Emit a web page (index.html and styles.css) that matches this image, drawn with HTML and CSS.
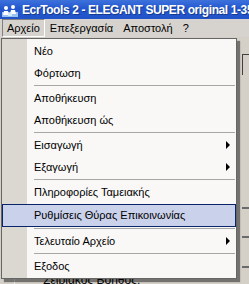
FILE: index.html
```html
<!DOCTYPE html>
<html lang="el">
<head>
    <meta charset="UTF-8">
    <title>EcrTools 2</title>
    <link rel="stylesheet" href="styles.css">
</head>
<body>
    <div class="window">
        <div class="titlebar">
            <svg class="app-icon" width="16" height="14" viewBox="0 0 16 14">
                <rect x="0" y="9" width="16" height="5" fill="#9cc2f0"/>
                <circle cx="4" cy="5" r="2" fill="#fff"/>
                <path d="M1 12 L2 8 L6 8 L7 12 Z" fill="#fff"/>
                <circle cx="11" cy="4" r="2" fill="#fff"/>
                <path d="M8 11 L9 7 L13 7 L14 11 Z" fill="#fff"/>
                <rect x="6" y="10" width="4" height="3" fill="#d8e8ff"/>
            </svg>
            <span class="title">EcrTools 2 - ELEGANT SUPER original 1-35</span>
        </div>

        <div class="menubar">
            <span class="menu-head open">Αρχείο</span>
            <span class="menu-head">Επεξεργασία</span>
            <span class="menu-head">Αποστολή</span>
            <span class="menu-head">?</span>
        </div>

        <div class="client">
            <div class="form-side">
                <div class="field top"></div>
                <div class="rule r1"></div>
                <div class="rule r2"></div>
                <div class="rule r3"></div>
            </div>
            <div class="bottom-label">Σειριακός Βοηθός:</div>
        </div>

        <!-- ανοιχτό μενού Αρχείο -->
        <div class="dropdown">
            <div class="item">Νέο</div>
            <div class="item">Φόρτωση</div>
            <div class="sep"></div>
            <div class="item">Αποθήκευση</div>
            <div class="item">Αποθήκευση ώς</div>
            <div class="sep"></div>
            <div class="item sub">Εισαγωγή</div>
            <div class="item sub">Εξαγωγή</div>
            <div class="sep"></div>
            <div class="item">Πληροφορίες Ταμειακής</div>
            <div class="item hover">Ρυθμίσεις Θύρας Επικοινωνίας</div>
            <div class="sep"></div>
            <div class="item sub">Τελευταίο Αρχείο</div>
            <div class="sep"></div>
            <div class="item">Εξοδος</div>
        </div>
    </div>
</body>
</html>
```

FILE: styles.css
```css
body {
    margin: 0;
    padding: 0;
    font-family: 'Liberation Sans', Arial, sans-serif;
    font-size: 11px;
    color: #000;
    background: #d4d0c8;
}

.window {
    position: relative;
    width: 249px;
    height: 284px;
    overflow: hidden;
    background: #d4d0c8;
    display: flex;
    flex-direction: column;
}

.titlebar {
    height: 19px;
    display: flex;
    align-items: center;
    gap: 4px;
    padding-left: 2px;
    background: linear-gradient(to bottom, #3d72dc, #2457cf 45%, #2152c8);
    white-space: nowrap;
}

.app-icon {
    flex: none;
}

.title {
    color: #fff;
    font-weight: bold;
    font-size: 12px;
    letter-spacing: -0.4px;
    text-shadow: 1px 1px 0 #163a8c;
}

.menubar {
    height: 18px;
    display: flex;
    align-items: center;
    padding-left: 2px;
    background: #d6d3ce;
}

.menu-head {
    padding: 2px 4px;
    border: 1px solid transparent;
    line-height: 12px;
}

.menu-head.open {
    border-color: #808080 #fff #fff #808080;
}

.client {
    flex: 1;
    display: flex;
    flex-direction: column;
    justify-content: space-between;
}

.form-side {
    display: flex;
    flex-direction: column;
    margin-left: 242px;
    padding-top: 17px;
}

.field.top {
    height: 20px;
    border-top: 1px solid #404040;
    border-left: 1px solid #404040;
}

.rule {
    height: 0;
    border-top: 2px solid #6a6a6a;
}

.rule.r1 { margin-top: 132px; }
.rule.r2 { margin-top: 27px; }
.rule.r3 { margin-top: 28px; }

.bottom-label {
    padding-left: 28px;
    height: 11px;
    line-height: 14px;
    font-size: 12px;
    border-left: 1px solid #f0f0f0;
    margin-left: 14px;
}

.dropdown {
    position: absolute;
    left: 1px;
    top: 38px;
    width: 234px;
    padding: 1px 0;
    border: 1px solid #666;
    background: linear-gradient(to right, #dbd8d1 0, #dbd8d1 25px, #f9f8f7 25px);
    box-shadow: 3px 3px 1px rgba(0, 0, 0, 0.45);
}

.item {
    position: relative;
    height: 22px;
    line-height: 22px;
    padding-left: 32px;
    white-space: nowrap;
}

.item.sub::after {
    content: '';
    position: absolute;
    right: 6px;
    top: 7px;
    border-top: 4px solid transparent;
    border-bottom: 4px solid transparent;
    border-left: 4px solid #000;
}

.item.hover {
    height: 21px;
    line-height: 21px;
    padding-left: 31px;
    margin-top: 1px;
    border: 1px solid #0a246a;
    background: #c9d2ea;
}

.sep {
    height: 3px;
    margin-left: 32px;
    margin-right: 1px;
    background: linear-gradient(to bottom, transparent 1px, #a6a6a6 1px, #a6a6a6 2px, transparent 2px);
}
```
